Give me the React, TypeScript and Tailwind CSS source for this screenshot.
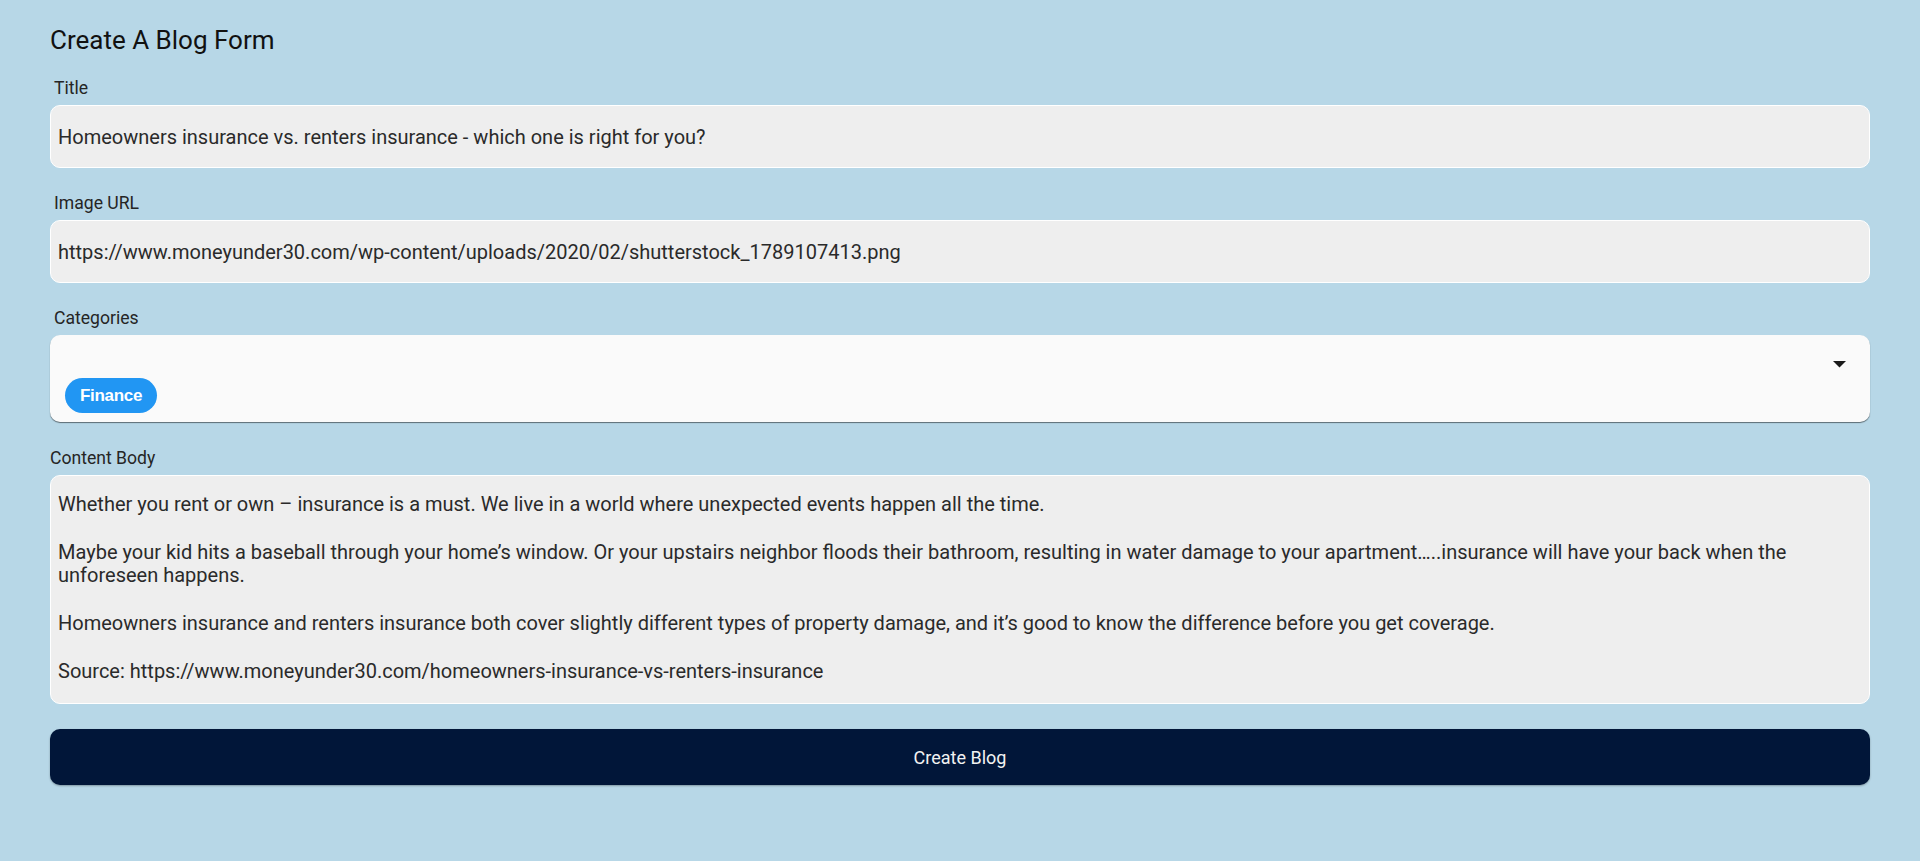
import React from 'react';

const font = { fontFamily: 'Roboto, "Noto Sans", sans-serif' };

const body = `Whether you rent or own – insurance is a must. We live in a world where unexpected events happen all the time.

Maybe your kid hits a baseball through your home’s window. Or your upstairs neighbor floods their bathroom, resulting in water damage to your apartment…..insurance will have your back when the unforeseen happens.

Homeowners insurance and renters insurance both cover slightly different types of property damage, and it’s good to know the difference before you get coverage.

Source: https://www.moneyunder30.com/homeowners-insurance-vs-renters-insurance`;

const Label: React.FC<{ text: string; indent?: boolean }> = ({ text, indent = true }) => (
  <div className={`h-[22px] mb-[6px] text-[17.6px] leading-[22px] text-[#252525] ${indent ? 'pl-[4px]' : ''}`}>
    {text}
  </div>
);

const TextInput: React.FC<{ value: string }> = ({ value }) => (
  <input
    readOnly
    defaultValue={value}
    className="block w-full h-[63px] rounded-[10px] border border-white bg-[#eeeeee] px-[7px] text-[20px] text-[#2a2a2a] outline-none"
    style={font}
  />
);

export default function App() {
  return (
    <div className="min-h-screen bg-[#b7d7e7] px-[50px] pt-[24px]" style={font}>
      <h1 className="text-[26px] leading-[32px] text-[#111111] font-normal">Create A Blog Form</h1>

      <form className="mt-[21px] flex flex-col" onSubmit={(e) => e.preventDefault()}>
        {/* Title */}
        <Label text="Title" />
        <TextInput value="Homeowners insurance vs. renters insurance - which one is right for you?" />

        {/* Image URL */}
        <div className="mt-[24px]">
          <Label text="Image URL" />
          <TextInput value="https://www.moneyunder30.com/wp-content/uploads/2020/02/shutterstock_1789107413.png" />
        </div>

        {/* Categories */}
        <div className="mt-[24px]">
          <Label text="Categories" />
          <div className="relative h-[87px] rounded-[10px] bg-[#fafafa] shadow-[0_1px_1px_rgba(0,0,0,0.5)] flex items-end px-[15px] pb-[9px]">
            <span
              className="inline-flex items-center h-[35px] px-[15px] rounded-full bg-[#2196f3] text-white text-[17px] font-bold tracking-[-0.3px]"
              style={{ fontFamily: '"Liberation Sans", Arial, sans-serif' }}
            >
              Finance
            </span>
            <svg
              className="absolute right-[24px] top-[26px]"
              width="13"
              height="7"
              viewBox="0 0 13 7"
            >
              <path d="M0 0h13L6.5 6.5z" fill="#1a1a1a" />
            </svg>
          </div>
        </div>

        {/* Content Body */}
        <div className="mt-[25px]">
          <Label text="Content Body" indent={false} />
          <div className="h-[229px] rounded-[10px] border border-white bg-[#eeeeee] px-[7px] pt-[17px] text-[20px] leading-[23.8px] text-[#2a2a2a] whitespace-pre-wrap">
            {body}
          </div>
        </div>

        <button
          type="submit"
          className="mt-[25px] h-[56px] w-full rounded-[10px] bg-[#011639] text-[#f2f2f2] text-[18px] font-normal shadow-[0_1px_2px_rgba(0,0,0,0.3)]"
        >
          Create Blog
        </button>
      </form>
    </div>
  );
}
